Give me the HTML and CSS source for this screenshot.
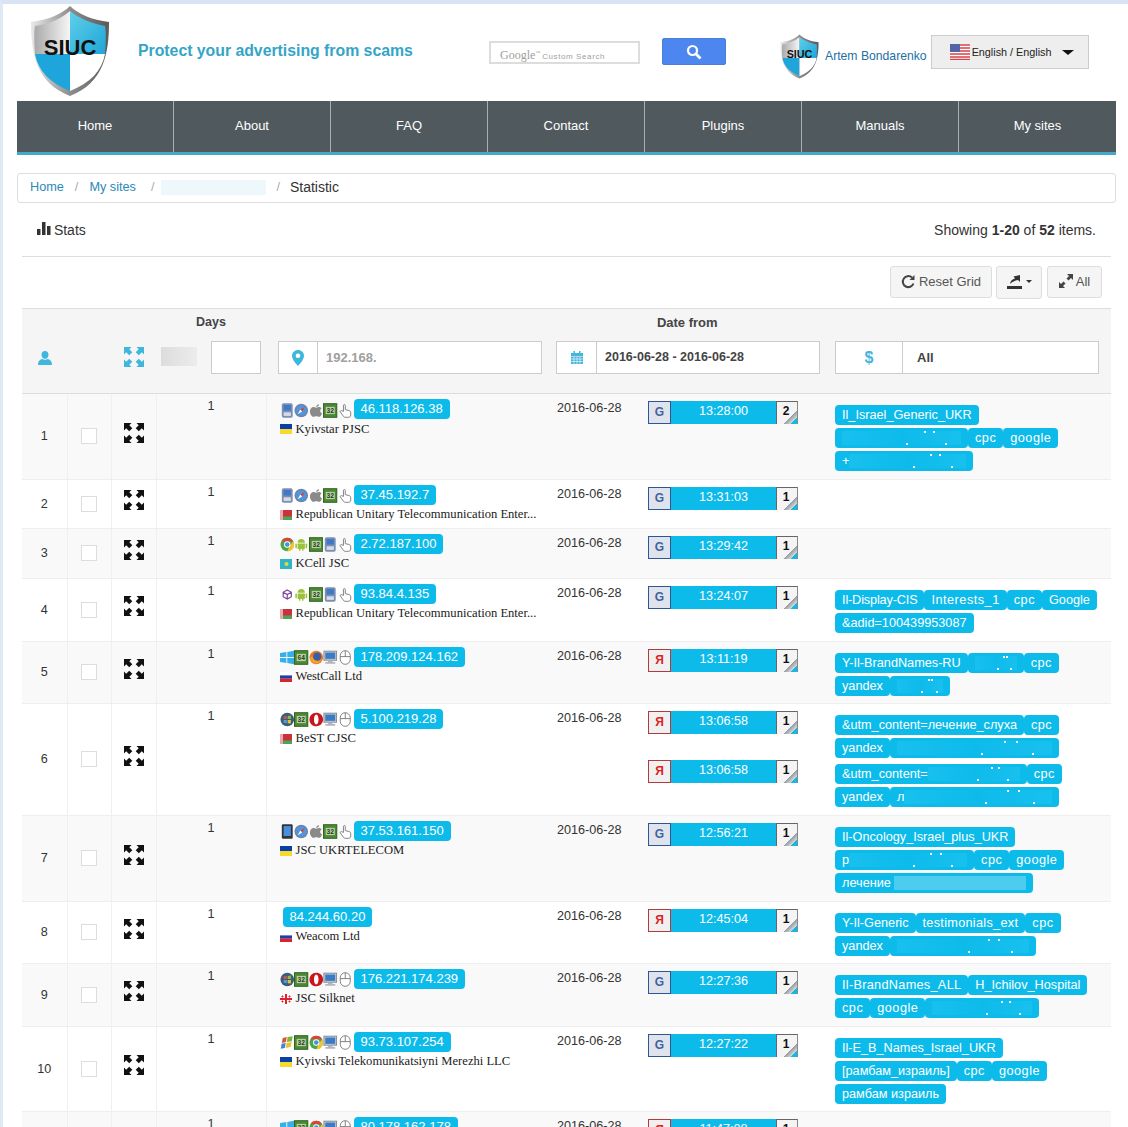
FILE: index.html
```html
<!DOCTYPE html>
<html lang="en">
  <head>
    <meta charset="utf-8">
    <title>SIUC - Statistic</title>
    <link rel="stylesheet" href="styles.css">
  </head>
  <body>
    <svg class="sprites" width="0" height="0">
      <defs>
        <linearGradient id="rim" x1="0" x2="1"><stop offset="0" stop-color="#e8e8e8"/><stop offset=".5" stop-color="#8d8d8d"/><stop offset="1" stop-color="#5a5a5a"/></linearGradient>
        <linearGradient id="sky" x1="0" y1="0" x2="1" y2="1"><stop offset="0" stop-color="#5fd0ea"/><stop offset="1" stop-color="#20a5d8"/></linearGradient>
        <linearGradient id="silver" x1="0" x2="1"><stop offset="0" stop-color="#a9a9a9"/><stop offset="1" stop-color="#f6f6f6"/></linearGradient>
        <symbol id="shield" viewBox="0 0 80 92">
          <path d="M40 1C32 9 18 15 1 17 1 48 6 78 40 91 74 78 79 48 79 17 62 15 48 9 40 1z" fill="url(#rim)"/>
          <path d="M40 6v43H5C4 34 4 27 5 21 20 19 32 13 40 6z" fill="url(#silver)"/>
          <path d="M40 6c8 7 23 13 35 15 1 6 1 13 0 28H40z" fill="url(#sky)"/>
          <path d="M5 49h35v37C20 78 8 66 5 49z" fill="#1ea6dc"/>
          <path d="M40 49h35c-3 17-15 29-35 37z" fill="#fff"/>
          <text x="40" y="50" text-anchor="middle" font-family="Liberation Sans, sans-serif" font-weight="bold" font-size="22" fill="#111">SIUC</text>
        </symbol>
        <symbol id="i-expand" viewBox="0 0 20 20">
          <path d="M0 0h7.500L5.300 2.200 8.300 5.200 5.200 8.300 2.200 5.300 0 7.500zM20 0v7.500l-2.200-2.200-3 3-3.100-3.100 3-3L12.500 0zM0 20v-7.500l2.200 2.200 3-3 3.100 3.100-3 3L7.500 20zM20 20h-7.500l2.200-2.200-3-3 3.100-3.100 3 3 2.200-2.200z"/>
        </symbol>
        <symbol id="i-phone" viewBox="0 0 16 16"><rect x="2" y="0" width="12" height="16" rx="2" fill="#7d8fb0"/><rect x="4" y="2" width="8" height="6" fill="#3f78c9"/><rect x="4" y="10" width="8" height="4" fill="#d5dbe6"/></symbol>
        <symbol id="i-tablet" viewBox="0 0 16 16"><rect x="2" y="0" width="12" height="16" rx="1.500" fill="#30343c"/><rect x="4" y="2" width="8" height="11" fill="#4a8fdc"/></symbol>
        <symbol id="i-safari" viewBox="0 0 16 16"><circle cx="8" cy="8" r="7.500" fill="#6d86ad"/><circle cx="8" cy="8" r="5.500" fill="#4d97e0"/><path d="M12 4 7 7l2 2z" fill="#e03a2e"/><path d="M4 12l3-5 2 2z" fill="#fff"/></symbol>
        <symbol id="i-apple" viewBox="0 0 16 16"><path d="M11 1c0 2-1.500 3-3 3 0-2 1.500-3 3-3zM8 5c1-.6 2-1 3-1 1.200 0 2.300.6 3 1.600-2.400 1.500-2 4.600.4 5.600C13.500 13.600 12.200 15 11 15c-1 0-1.500-.6-3-.6S6 15 5 15c-2 0-4-3.500-4-6 0-3 2-5 4-5 1 0 2 .6 3 1z" fill="#8a8a8a"/></symbol>
        <symbol id="i-chip32" viewBox="0 0 16 16"><rect x=".5" y=".5" width="15" height="15" fill="#4a8a32" stroke="#2b5a1b"/><rect x="3" y="4" width="10" height="8" fill="#b9cfa8"/><text x="8" y="10.500" text-anchor="middle" font-family="Liberation Mono, monospace" font-weight="bold" font-size="7" fill="#1d3a12">32</text></symbol>
        <symbol id="i-chip64" viewBox="0 0 16 16"><rect x=".5" y=".5" width="15" height="15" fill="#4a8a32" stroke="#2b5a1b"/><rect x="3" y="4" width="10" height="8" fill="#b9cfa8"/><text x="8" y="10.500" text-anchor="middle" font-family="Liberation Mono, monospace" font-weight="bold" font-size="7" fill="#1d3a12">64</text></symbol>
        <symbol id="i-hand" viewBox="0 0 16 16"><path d="M6 9V2.500C6 1 8 1 8 2.500V7l4 1c1.500.4 2 1 2 2.500V13c0 1.500-1 2.500-2.500 2.500H8C6.500 15.500 6 14.500 5 13L2.500 9.500C2 8.500 3.500 7.500 4.500 8.500z" fill="#fff" stroke="#777"/></symbol>
        <symbol id="i-chrome" viewBox="0 0 16 16"><circle cx="8" cy="8" r="7.500" fill="#4aa84a"/><path d="M1.500 4.300A7.500 7.500 0 0 1 14.500 4.300H8z" fill="#dc4437"/><path d="M14.500 4.300A7.500 7.500 0 0 1 8 15.500L11 9z" fill="#f4c430"/><circle cx="8" cy="8" r="3.500" fill="#fff"/><circle cx="8" cy="8" r="2.500" fill="#4a8fdc"/></symbol>
        <symbol id="i-android" viewBox="0 0 16 16"><path d="M4 6a4 4 0 0 1 8 0zM4 6.800h8V13H10.500v2h-1.500v-2H7v2H5.500v-2H4z" fill="#9cc23c"/><rect x="1.500" y="7" width="1.700" height="5" rx=".8" fill="#9cc23c"/><rect x="12.800" y="7" width="1.700" height="5" rx=".8" fill="#9cc23c"/></symbol>
        <symbol id="i-win8" viewBox="0 0 16 16"><path d="M0 3l7-1v5.500H0zM8 2l8-1.500v7H8zM0 8.500h7V14l-7-1zM8 8.500h8v7L8 14z" fill="#35b0ea"/></symbol>
        <symbol id="i-firefox" viewBox="0 0 16 16"><circle cx="8" cy="8" r="7.500" fill="#e8791e"/><circle cx="9" cy="7" r="4.500" fill="#3a5fa8"/><path d="M1 9c1 4 5 6 8 5.500 3-.5 5-3 5.500-6-1 2.500-3 4-5.500 3.500C6 11.500 4 10 4 7 2.500 7 1.500 8 1 9z" fill="#f3a32c"/></symbol>
        <symbol id="i-monitor" viewBox="0 0 16 16"><rect x="1" y="1" width="14" height="10" fill="#c7ccd3" stroke="#7d858f"/><rect x="2.500" y="2.500" width="11" height="7" fill="#3a7bc8"/><path d="M5.500 11.500h5v1.500h3v2h-11v-2h3z" fill="#b2b7be"/></symbol>
        <symbol id="i-mouse" viewBox="0 0 16 16"><rect x="2.500" y=".5" width="11" height="15" rx="5.500" fill="#fff" stroke="#777"/><path d="M2.500 7h11M8 .5V7" fill="none" stroke="#777"/></symbol>
        <symbol id="i-opera" viewBox="0 0 16 16"><path fill-rule="evenodd" d="M8 .5c4.500 0 7.500 3.300 7.500 7.500s-3 7.500-7.500 7.500S.5 12.200.5 8 3.500.5 8 .5zm0 2C6.500 2.500 5.500 5 5.500 8s1 5.500 2.500 5.500S10.500 11 10.500 8 9.500 2.500 8 2.500z" fill="#c9151b"/></symbol>
        <symbol id="i-win7" viewBox="0 0 16 16"><circle cx="8" cy="8" r="7.500" fill="#3a5d7e"/><path d="M4 4.500l3.500-.5v3.500H4z" fill="#d9553a"/><path d="M8.500 4l3.500-.5v4H8.500z" fill="#8cbf3f"/><path d="M4 8.500h3.500V12L4 11.500z" fill="#4aa3df"/><path d="M8.500 8.500H12v4l-3.500-.5z" fill="#f0c030"/></symbol>
        <symbol id="i-winxp" viewBox="0 0 16 16"><path d="M3 3l4.500-1-1 5.500L2 8.500z" fill="#d9553a"/><path d="M8.500 2 14 1l-1 5.500-5.500 1z" fill="#7fb53a"/><path d="M1.800 9.500 6.300 8.500l-1 5.500-4.500 1z" fill="#3f86d6"/><path d="M7.300 8.500 12.800 7.500l-1 5.500-5.500 1z" fill="#f0c030"/></symbol>
        <symbol id="i-tor" viewBox="0 0 16 16"><path d="M8 3l4.500 2.500v5L8 13l-4.500-2.500v-5zM3.500 5.500 8 8l4.500-2.500M8 8v5" fill="none" stroke="#7d4698" stroke-width="1.300"/></symbol>
        <symbol id="f-ua" viewBox="0 0 12 10"><rect width="12" height="5" fill="#0b3fa8"/><rect y="5" width="12" height="5" fill="#f7da2e"/></symbol>
        <symbol id="f-by" viewBox="0 0 12 10"><rect width="12" height="10" fill="#c8313e"/><rect y="6.500" x="3" width="9" height="3.500" fill="#4aa657"/><rect width="3" height="10" fill="#e8a9ac"/></symbol>
        <symbol id="f-kz" viewBox="0 0 12 10"><rect width="12" height="10" fill="#2fb4c7"/><circle cx="6.500" cy="5" r="2" fill="#e8d44a"/></symbol>
        <symbol id="f-ru" viewBox="0 0 12 10"><rect width="12" height="3.400" fill="#fff"/><rect y="3.400" width="12" height="3.300" fill="#1c3fa8"/><rect y="6.700" width="12" height="3.300" fill="#e0202c"/></symbol>
        <symbol id="f-ge" viewBox="0 0 12 10"><rect width="12" height="10" fill="#fff"/><path d="M0 5h12M6 0v10" stroke="#e0202c" stroke-width="2"/><path d="M2.500 1.500v2M1.500 2.500h2M9.500 1.500v2M8.500 2.500h2M2.500 6.500v2M1.500 7.500h2M9.500 6.500v2M8.500 7.500h2" stroke="#e0202c"/></symbol>
      </defs>
    </svg>

    <div class="page">
      <header class="top">
        <svg class="logo"><use href="#shield"/></svg>
        <div class="slogan">Protect your advertising from scams</div>
        <div class="search-box"><span class="search-google">Google<sup>™</sup></span> <span class="search-custom">Custom Search</span></div>
        <button class="search-btn" type="button">
          <svg width="16" height="16" viewBox="0 0 16 16"><circle cx="6.500" cy="6.500" r="4.500" fill="none" stroke="#fff" stroke-width="2.200"/><path d="M10 10l4.500 4.500" stroke="#fff" stroke-width="2.800"/></svg>
        </button>
        <svg class="logo-small"><use href="#shield"/></svg>
        <a class="user-name">Artem Bondarenko</a>
        <div class="lang">
          <svg class="lang-flag" viewBox="0 0 20 16">
            <rect width="20" height="16" fill="#fff"/>
            <path d="M0 1h20M0 4h20M0 7h20M0 10h20M0 13h20M0 15.500h20" stroke="#d8414a" stroke-width="1.500"/>
            <rect width="10" height="8" fill="#5566a8"/>
          </svg>
          <span class="lang-text">English / English</span>
          <span class="caret-big"></span>
        </div>
      </header>

      <nav class="menu">
        <a>Home</a><a>About</a><a>FAQ</a><a>Contact</a><a>Plugins</a><a>Manuals</a><a>My sites</a>
      </nav>

      <div class="crumbs">
        <a>Home</a><i>/</i><a>My sites</a><i class="sep-wide">/</i><span class="crumb-smear"></span><i class="sep-after">/</i><span class="crumb-here">Statistic</span>
      </div>

      <div class="summary">
        <div class="summary-title">
          <svg width="14" height="13" viewBox="0 0 14 13"><path d="M0 7h3.500v6H0zM5 0h3.500v13H5zM10 4h3.500v9H10z" fill="#333"/></svg>
          Stats
        </div>
        <div>Showing <b>1-20</b> of <b>52</b> items.</div>
      </div>

      <div class="toolbar">
        <button class="tool-btn reset" type="button">
          <svg width="15" height="15" viewBox="0 0 15 15"><path d="M12.500 9.500A5.500 5.500 0 1 1 11 3.500" fill="none" stroke="#444" stroke-width="2"/><path d="M13.500 1v5h-5z" fill="#444"/></svg>
          Reset Grid
        </button>
        <button class="tool-btn export" type="button">
          <svg width="15" height="15" viewBox="0 0 15 15"><path d="M0 12h15v3H0z" fill="#333"/><path d="M3 10c.2-3 2.500-5 5-5.500L6.500 2.500 13 1v7l-2-2C8 6.500 5 8 3 10z" fill="#333"/></svg>
          <span class="caret"></span>
        </button>
        <button class="tool-btn all" type="button">
          <svg width="14" height="14" viewBox="0 0 14 14"><path d="M14 0v6l-2-2-2.500 2.500-2-2L10 2 8 0zM0 14V8l2 2 2.500-2.500 2 2L4 12l2 2z" fill="#444"/></svg>
          All
        </button>
      </div>

      <div class="filters">
        <div class="filter-labels">
          <span class="label-days">Days</span>
          <span class="label-date">Date from</span>
        </div>
        <div class="filter-row">
          <svg class="filter-user" width="14" height="14" viewBox="0 0 14 14"><path d="M7 0c2.200 0 3.500 1.600 3.500 3.800S9 8 7 8 3.500 6 3.500 3.800 4.800 0 7 0zM4.500 8C5.500 9 8.500 9 9.500 8 12 8.500 14 10 14 14H0c0-4 2-5.500 4.500-6z" fill="#3fb7dc"/></svg>
          <svg class="filter-expand"><use href="#i-expand"/></svg>
          <span class="filter-smear"></span>
          <div class="field field-days"></div>
          <div class="field field-ip">
            <span class="addon">
              <svg width="12" height="16" viewBox="0 0 12 16"><path fill-rule="evenodd" d="M6 0c3.300 0 6 2.500 6 5.700C12 9.500 8 13.500 6 16 4 13.500 0 9.500 0 5.700 0 2.500 2.700 0 6 0zm0 3.500a2.300 2.300 0 1 0 0 4.600 2.300 2.300 0 0 0 0-4.600z" fill="#3fb7dc"/></svg>
            </span>
            <span class="field-text muted">192.168.</span>
          </div>
          <div class="field field-date">
            <span class="addon">
              <svg width="12" height="13" viewBox="0 0 12 13"><path d="M0 2h12v3H0zM0 5.500h12V13H0zM2.500 0h1.500v2.500H2.500zM8 0h1.500v2.500H8z" fill="#45b5dc"/><path d="M0 8h12M0 10.500h12M3 5.500V13M6 5.500V13M9 5.500V13" stroke="#fff" stroke-width=".6"/></svg>
            </span>
            <span class="field-text">2016-06-28 - 2016-06-28</span>
          </div>
          <div class="field field-cost">
            <span class="addon addon-wide">$</span>
            <span class="field-text">All</span>
          </div>
        </div>
      </div>

      <table class="grid">
        <colgroup>
          <col class="c-num"><col class="c-check"><col class="c-open"><col class="c-days"><col class="c-ip"><col class="c-date"><col class="c-time"><col class="c-tags">
        </colgroup>
        <tbody>
          <tr class="h-85">
            <td class="mid">1</td><td class="mid"><span class="check"></span></td><td class="mid"><svg class="open"><use href="#i-expand"/></svg></td><td class="days">1</td>
            <td class="ip"><div class="ip-line"><span class="icons"><svg><use href="#i-phone"/></svg><svg><use href="#i-safari"/></svg><svg><use href="#i-apple"/></svg><svg><use href="#i-chip32"/></svg><svg><use href="#i-hand"/></svg></span><span class="ip-badge">46.118.126.38</span></div><div class="org"><svg class="flag"><use href="#f-ua"/></svg>Kyivstar PJSC</div></td>
            <td class="date">2016-06-28</td>
            <td class="time"><div class="hit"><span class="src src-g">G</span><span class="hit-time">13:28:00</span><span class="count">2</span></div></td>
            <td class="tags"><div class="tag-line"><span class="tag">Il_Israel_Generic_UKR</span></div><div class="tag-line"><span class="tag"><span class="smear w-119"></span></span><span class="tag tag-wide">cpc</span><span class="tag tag-wide">google</span></div><div class="tag-line"><span class="tag">+<span class="smear w-117"></span></span></div></td>
          </tr>
          <tr class="h-49">
            <td class="mid">2</td><td class="mid"><span class="check"></span></td><td class="mid"><svg class="open"><use href="#i-expand"/></svg></td><td class="days">1</td>
            <td class="ip"><div class="ip-line"><span class="icons"><svg><use href="#i-phone"/></svg><svg><use href="#i-safari"/></svg><svg><use href="#i-apple"/></svg><svg><use href="#i-chip32"/></svg><svg><use href="#i-hand"/></svg></span><span class="ip-badge">37.45.192.7</span></div><div class="org"><svg class="flag"><use href="#f-by"/></svg>Republican Unitary Telecommunication Enter...</div></td>
            <td class="date">2016-06-28</td>
            <td class="time"><div class="hit"><span class="src src-g">G</span><span class="hit-time">13:31:03</span><span class="count">1</span></div></td>
            <td class="tags"></td>
          </tr>
          <tr class="h-50">
            <td class="mid">3</td><td class="mid"><span class="check"></span></td><td class="mid"><svg class="open"><use href="#i-expand"/></svg></td><td class="days">1</td>
            <td class="ip"><div class="ip-line"><span class="icons"><svg><use href="#i-chrome"/></svg><svg><use href="#i-android"/></svg><svg><use href="#i-chip32"/></svg><svg><use href="#i-phone"/></svg><svg><use href="#i-hand"/></svg></span><span class="ip-badge">2.72.187.100</span></div><div class="org"><svg class="flag"><use href="#f-kz"/></svg>KCell JSC</div></td>
            <td class="date">2016-06-28</td>
            <td class="time"><div class="hit"><span class="src src-g">G</span><span class="hit-time">13:29:42</span><span class="count">1</span></div></td>
            <td class="tags"></td>
          </tr>
          <tr class="h-63">
            <td class="mid">4</td><td class="mid"><span class="check"></span></td><td class="mid"><svg class="open"><use href="#i-expand"/></svg></td><td class="days">1</td>
            <td class="ip"><div class="ip-line"><span class="icons"><svg><use href="#i-tor"/></svg><svg><use href="#i-android"/></svg><svg><use href="#i-chip32"/></svg><svg><use href="#i-phone"/></svg><svg><use href="#i-hand"/></svg></span><span class="ip-badge">93.84.4.135</span></div><div class="org"><svg class="flag"><use href="#f-by"/></svg>Republican Unitary Telecommunication Enter...</div></td>
            <td class="date">2016-06-28</td>
            <td class="time"><div class="hit"><span class="src src-g">G</span><span class="hit-time">13:24:07</span><span class="count">1</span></div></td>
            <td class="tags"><div class="tag-line"><span class="tag tag-narrow">Il-Display-CIS</span><span class="tag tag-wide">Interests_1</span><span class="tag tag-wide">cpc</span><span class="tag">Google</span></div><div class="tag-line"><span class="tag">&amp;adid=100439953087</span></div></td>
          </tr>
          <tr class="h-62">
            <td class="mid">5</td><td class="mid"><span class="check"></span></td><td class="mid"><svg class="open"><use href="#i-expand"/></svg></td><td class="days">1</td>
            <td class="ip"><div class="ip-line"><span class="icons"><svg><use href="#i-win8"/></svg><svg><use href="#i-chip64"/></svg><svg><use href="#i-firefox"/></svg><svg><use href="#i-monitor"/></svg><svg><use href="#i-mouse"/></svg></span><span class="ip-badge">178.209.124.162</span></div><div class="org"><svg class="flag"><use href="#f-ru"/></svg>WestCall Ltd</div></td>
            <td class="date">2016-06-28</td>
            <td class="time"><div class="hit"><span class="src src-y">Я</span><span class="hit-time">13:11:19</span><span class="count">1</span></div></td>
            <td class="tags"><div class="tag-line"><span class="tag">Y-Il-BrandNames-RU</span><span class="tag"><span class="smear w-42"></span></span><span class="tag tag-wide">cpc</span></div><div class="tag-line"><span class="tag">yandex</span><span class="tag"><span class="smear w-46"></span></span></div></td>
          </tr>
          <tr class="h-112">
            <td class="mid">6</td><td class="mid"><span class="check"></span></td><td class="mid"><svg class="open"><use href="#i-expand"/></svg></td><td class="days">1</td>
            <td class="ip"><div class="ip-line"><span class="icons"><svg><use href="#i-win7"/></svg><svg><use href="#i-chip32"/></svg><svg><use href="#i-opera"/></svg><svg><use href="#i-monitor"/></svg><svg><use href="#i-mouse"/></svg></span><span class="ip-badge">5.100.219.28</span></div><div class="org"><svg class="flag"><use href="#f-by"/></svg>BeST CJSC</div></td>
            <td class="date">2016-06-28</td>
            <td class="time"><div class="hit"><span class="src src-y">Я</span><span class="hit-time">13:06:58</span><span class="count">1</span></div><div class="hit hit-next"><span class="src src-y">Я</span><span class="hit-time">13:06:58</span><span class="count">1</span></div></td>
            <td class="tags"><div class="tag-block"><div class="tag-line"><span class="tag">&amp;utm_content=лечение_слуха</span><span class="tag tag-wide">cpc</span></div><div class="tag-line"><span class="tag">yandex</span><span class="tag"><span class="smear w-155"></span></span></div></div><div class="tag-block"><div class="tag-line"><span class="tag">&amp;utm_content=<span class="smear w-92"></span></span><span class="tag tag-wide">cpc</span></div><div class="tag-line"><span class="tag">yandex</span><span class="tag">л<span class="smear w-148"></span></span></div></div></td>
          </tr>
          <tr class="h-86">
            <td class="mid">7</td><td class="mid"><span class="check"></span></td><td class="mid"><svg class="open"><use href="#i-expand"/></svg></td><td class="days">1</td>
            <td class="ip"><div class="ip-line"><span class="icons"><svg><use href="#i-tablet"/></svg><svg><use href="#i-safari"/></svg><svg><use href="#i-apple"/></svg><svg><use href="#i-chip32"/></svg><svg><use href="#i-hand"/></svg></span><span class="ip-badge">37.53.161.150</span></div><div class="org"><svg class="flag"><use href="#f-ua"/></svg>JSC UKRTELECOM</div></td>
            <td class="date">2016-06-28</td>
            <td class="time"><div class="hit"><span class="src src-g">G</span><span class="hit-time">12:56:21</span><span class="count">1</span></div></td>
            <td class="tags"><div class="tag-line"><span class="tag">Il-Oncology_Israel_plus_UKR</span></div><div class="tag-line"><span class="tag">p<span class="smear w-118"></span></span><span class="tag tag-wide">cpc</span><span class="tag tag-wide">google</span></div><div class="tag-line"><span class="tag">лечение&nbsp;<span class="smear smear-pale w-132"></span></span></div></td>
          </tr>
          <tr class="h-62">
            <td class="mid">8</td><td class="mid"><span class="check"></span></td><td class="mid"><svg class="open"><use href="#i-expand"/></svg></td><td class="days">1</td>
            <td class="ip"><div class="ip-line ip-line-bare"><span class="ip-badge">84.244.60.20</span></div><div class="org"><svg class="flag"><use href="#f-ru"/></svg>Weacom Ltd</div></td>
            <td class="date">2016-06-28</td>
            <td class="time"><div class="hit"><span class="src src-y">Я</span><span class="hit-time">12:45:04</span><span class="count">1</span></div></td>
            <td class="tags"><div class="tag-line"><span class="tag">Y-Il-Generic</span><span class="tag tag-snug">testimonials_ext</span><span class="tag tag-wide">cpc</span></div><div class="tag-line"><span class="tag">yandex</span><span class="tag"><span class="smear w-132"></span></span></div></td>
          </tr>
          <tr class="h-63">
            <td class="mid">9</td><td class="mid"><span class="check"></span></td><td class="mid"><svg class="open"><use href="#i-expand"/></svg></td><td class="days">1</td>
            <td class="ip"><div class="ip-line"><span class="icons"><svg><use href="#i-win7"/></svg><svg><use href="#i-chip32"/></svg><svg><use href="#i-opera"/></svg><svg><use href="#i-monitor"/></svg><svg><use href="#i-mouse"/></svg></span><span class="ip-badge">176.221.174.239</span></div><div class="org"><svg class="flag"><use href="#f-ge"/></svg>JSC Silknet</div></td>
            <td class="date">2016-06-28</td>
            <td class="time"><div class="hit"><span class="src src-g">G</span><span class="hit-time">12:27:36</span><span class="count">1</span></div></td>
            <td class="tags"><div class="tag-line"><span class="tag tag-snug">Il-BrandNames_ALL</span><span class="tag">H_Ichilov_Hospital</span></div><div class="tag-line"><span class="tag tag-wide">cpc</span><span class="tag tag-wide">google</span><span class="tag"><span class="smear w-100"></span></span></div></td>
          </tr>
          <tr class="h-85">
            <td class="mid">10</td><td class="mid"><span class="check"></span></td><td class="mid"><svg class="open"><use href="#i-expand"/></svg></td><td class="days">1</td>
            <td class="ip"><div class="ip-line"><span class="icons"><svg><use href="#i-winxp"/></svg><svg><use href="#i-chip32"/></svg><svg><use href="#i-chrome"/></svg><svg><use href="#i-monitor"/></svg><svg><use href="#i-mouse"/></svg></span><span class="ip-badge">93.73.107.254</span></div><div class="org"><svg class="flag"><use href="#f-ua"/></svg>Kyivski Telekomunikatsiyni Merezhi LLC</div></td>
            <td class="date">2016-06-28</td>
            <td class="time"><div class="hit"><span class="src src-g">G</span><span class="hit-time">12:27:22</span><span class="count">1</span></div></td>
            <td class="tags"><div class="tag-line"><span class="tag">Il-E_B_Names_Israel_UKR</span></div><div class="tag-line"><span class="tag">[рамбам_израиль]</span><span class="tag tag-wide">cpc</span><span class="tag tag-wide">google</span></div><div class="tag-line"><span class="tag">рамбам израиль</span></div></td>
          </tr>
          <tr class="h-86">
            <td class="mid">11</td><td class="mid"><span class="check"></span></td><td class="mid"><svg class="open"><use href="#i-expand"/></svg></td><td class="days">1</td>
            <td class="ip"><div class="ip-line"><span class="icons"><svg><use href="#i-win8"/></svg><svg><use href="#i-chip32"/></svg><svg><use href="#i-chrome"/></svg><svg><use href="#i-monitor"/></svg><svg><use href="#i-mouse"/></svg></span><span class="ip-badge">80.178.162.178</span></div></td>
            <td class="date">2016-06-28</td>
            <td class="time"><div class="hit"><span class="src src-y">Я</span><span class="hit-time">11:47:08</span><span class="count">1</span></div></td>
            <td class="tags"></td>
          </tr>
        </tbody>
      </table>
    </div>
  </body>
</html>
```

FILE: styles.css
```css
html, body {
  margin: 0;
  height: 100%;
  overflow: hidden;
}
body {
  box-sizing: border-box;
  background: #fff;
  border-top: 4px solid #d6e4f4;
  border-left: 3px solid #dfe9f5;
  color: #333;
  font-family: "Liberation Sans", Arial, sans-serif;
  font-size: 14px;
}
.sprites {
  position: absolute;
}
.page {
  width: 1099px;
  height: 1123px;
  margin-left: 14px;
  overflow: hidden;
}

/* header */
.top {
  display: flex;
  align-items: flex-start;
  height: 97px;
}
.logo {
  width: 80px;
  height: 92px;
  margin: 1px 0 0 13px;
}
.slogan {
  width: 351px;
  margin: 37px 0 0 28px;
  color: #34a5c6;
  font-size: 15.800px;
  font-weight: bold;
  line-height: 19px;
}
.search-box {
  box-sizing: border-box;
  width: 151px;
  height: 23px;
  margin-top: 37px;
  padding-left: 9px;
  border: 2px solid #ddd;
  color: #a0a0a0;
  line-height: 19px;
  white-space: nowrap;
}
.search-google {
  font-family: "Liberation Serif", serif;
  font-size: 12px;
}
.search-google sup {
  font-size: 5px;
}
.search-custom {
  margin-left: -2px;
  font-size: 8px;
  letter-spacing: .6px;
}
.search-btn {
  width: 64px;
  height: 27px;
  margin: 34px 0 0 22px;
  padding: 0;
  background: #4d86ee;
  border: 1px solid #4a7fd8;
  border-radius: 2px;
}
.search-btn svg {
  display: block;
  margin: 0 auto;
}
.logo-small {
  width: 41px;
  height: 45px;
  margin: 30px 0 0 53px;
}
.user-name {
  margin: 45px 0 0 5px;
  color: #236fa5;
  font-size: 12.200px;
  line-height: 15px;
  white-space: nowrap;
}
.lang {
  box-sizing: border-box;
  display: flex;
  align-items: center;
  width: 158px;
  height: 34px;
  margin: 31px 0 0 4px;
  padding-left: 18px;
  background: #eee;
  border: 1px solid #ccc;
  color: #222;
  font-size: 10.800px;
}
.lang-flag {
  width: 20px;
  height: 16px;
}
.lang-text {
  margin-left: 2px;
  white-space: nowrap;
}
.caret-big {
  margin-left: 11px;
  border-top: 5px solid #111;
  border-left: 6px solid transparent;
  border-right: 6px solid transparent;
}

/* nav */
.menu {
  display: flex;
  height: 51px;
  background: #50595d;
  border-bottom: 3px solid #45aac8;
}
.menu a {
  box-sizing: border-box;
  flex: none;
  width: 157px;
  border-left: 1px solid #a9aeb0;
  color: #fff;
  font-size: 13px;
  line-height: 50px;
  text-align: center;
}
.menu a:first-child {
  width: 156px;
  border-left: none;
}
.menu a:last-child {
  flex: 1;
}

.crumbs {
  box-sizing: border-box;
  display: flex;
  align-items: center;
  height: 30px;
  margin-top: 18px;
  padding: 0 0 2px 12px;
  border: 1px solid #ddd;
  border-radius: 3px;
  font-size: 12.700px;
}
.crumbs a {
  color: #2a8ab8;
}
.crumbs i {
  margin: 0 11px;
  color: #aaa;
  font-style: normal;
}
.crumbs .sep-wide {
  margin-left: 15px;
}
.crumbs .sep-after {
  margin: 0 10px;
}
.crumb-smear {
  width: 105px;
  height: 15px;
  margin-left: -4px;
  background: #eef7fb;
}
.crumb-here {
  font-size: 14px;
}

/* stats line */
.summary {
  display: flex;
  justify-content: space-between;
  height: 54px;
  margin-left: 5px;
  width: 1089px;
  padding: 0 15px;
  box-sizing: border-box;
  border-bottom: 1px solid #ddd;
  line-height: 55px;
}
.summary-title svg {
  margin-right: -1px;
}
.toolbar {
  display: flex;
  justify-content: flex-end;
  gap: 4px;
  height: 51px;
  width: 1085px;
  padding-top: 9px;
  box-sizing: border-box;
}
.tool-btn {
  display: flex;
  align-items: center;
  justify-content: center;
  gap: 3px;
  height: 32px;
  padding: 0 0 2px;
  background: #f5f5f5;
  border: 1px solid #ddd;
  border-radius: 3px;
  color: #555;
  font-family: inherit;
  font-size: 13px;
}
.reset {
  width: 102px;
}
.export {
  width: 46px;
  height: 33px;
  gap: 4px;
}
.all {
  width: 55px;
  margin-left: 1px;
}
.caret {
  border-top: 3px solid #333;
  border-left: 3px solid transparent;
  border-right: 3px solid transparent;
}

/* filter head */
.filters {
  box-sizing: border-box;
  width: 1089px;
  height: 86px;
  margin-left: 5px;
  background: #f5f5f5;
  border-top: 1px solid #ddd;
  border-bottom: 1px solid #ddd;
}
.filter-labels {
  display: flex;
  height: 32px;
  color: #444;
  font-size: 13px;
  font-weight: bold;
  line-height: 27px;
}
.label-days {
  margin-left: 174px;
  font-size: 12.500px;
}
.label-date {
  margin-left: 431px;
}
.filter-row {
  display: flex;
  align-items: center;
  height: 33px;
}
.filter-user {
  margin-left: 16px;
}
.filter-expand {
  width: 20px;
  height: 20px;
  margin: -2px 0 0 72px;
  fill: #3fb7dc;
}
.filter-smear {
  width: 36px;
  height: 19px;
  margin: -2px 0 0 17px;
  background: linear-gradient(90deg, #dcdcdc, #e6e6e6 60%, #ececec);
}
.field {
  box-sizing: border-box;
  display: flex;
  height: 33px;
  background: #fff;
  border: 1px solid #ccc;
  font-size: 13px;
  font-weight: bold;
  line-height: 31px;
}
.field-days {
  width: 50px;
  margin-left: 14px;
}
.field-ip {
  width: 264px;
  margin-left: 17px;
}
.field-date {
  width: 264px;
  margin-left: 14px;
}
.field-cost {
  width: 264px;
  margin-left: 15px;
}
.addon {
  box-sizing: border-box;
  display: flex;
  align-items: center;
  justify-content: center;
  flex: none;
  width: 39px;
  border-right: 1px solid #ccc;
  color: #45b5dc;
}
.field-date .addon {
  width: 40px;
}
.addon-wide {
  width: 67px;
  font-size: 16px;
}
.field-text {
  padding-left: 8px;
  color: #444;
}
.field-date .field-text {
  font-size: 12.500px;
}
.field-cost .field-text {
  padding-left: 14px;
}
.field-text.muted {
  color: #a0a0a0;
}

/* grid */
.grid {
  width: 1089px;
  margin-left: 5px;
  border-collapse: collapse;
  table-layout: fixed;
  font-size: 12.600px;
}
.c-num { width: 45px; }
.c-check { width: 44px; }
.c-open { width: 45px; }
.c-days { width: 110px; }
.c-ip { width: 283px; }
.c-date { width: 91px; }
.c-time { width: 188px; }
.c-tags { width: 283px; }
.h-49 { height: 49px; }
.h-50 { height: 50px; }
.h-62 { height: 62px; }
.h-63 { height: 63px; }
.h-85 { height: 85px; }
.h-86 { height: 86px; }
.h-112 { height: 112px; }
.grid tr:nth-child(odd) {
  background: #f9f9f9;
}
.grid td {
  padding: 0;
  border-bottom: 1px solid #eee;
  vertical-align: top;
}
.grid td:nth-child(-n+4) {
  border-right: 1px solid #f0f0f0;
}
.grid td.mid {
  vertical-align: middle;
  text-align: center;
}
.check {
  display: block;
  box-sizing: border-box;
  width: 16px;
  height: 16px;
  margin: 0 auto;
  background: #fff;
  border: 1px solid #ddd;
}
.open {
  display: block;
  width: 20px;
  height: 20px;
  margin: 0 auto 7px;
  fill: #111;
}
.days {
  padding-top: 2px !important;
  line-height: 20px;
  text-align: center;
}
.ip {
  padding: 5px 0 0 13px !important;
}
.ip-line {
  display: flex;
  align-items: center;
  height: 20px;
}
.ip-line-bare {
  padding-left: 3px;
}
.icons {
  display: flex;
  width: 74px;
  margin-top: 2px;
}
.icons svg {
  flex: none;
  width: 14.500px;
  height: 15px;
}
.ip-badge {
  padding: 0 7px;
  background: #0dbbeb;
  border-radius: 4px;
  color: #fff;
  font-size: 13px;
  line-height: 20px;
}
.org {
  display: flex;
  align-items: center;
  height: 20px;
  color: #222;
  font-family: "Liberation Serif", serif;
  font-size: 12.600px;
  white-space: nowrap;
}
.flag {
  flex: none;
  width: 12px;
  height: 10px;
  margin-right: 4px;
}
.date {
  padding: 6px 0 0 8px !important;
  line-height: 16px;
}
.time {
  padding: 7px 0 0 8px !important;
}
.hit {
  display: flex;
  width: 150px;
  height: 23px;
  background: #0dbbeb;
  border-radius: 0 2px 2px 0;
}
.hit-next {
  margin-top: 26px;
}
.src {
  box-sizing: border-box;
  width: 23px;
  font-size: 12px;
  font-weight: bold;
  line-height: 21px;
  text-align: center;
}
.src-g {
  background: #dfe3ec;
  border: 1px solid #2f5597;
  color: #3f62a0;
}
.src-y {
  background: #f0f0f0;
  border: 1px solid #b23a3a;
  color: #e02020;
}
.hit-time {
  flex: 1;
  color: #fff;
  line-height: 20px;
  text-align: center;
}
.count {
  box-sizing: border-box;
  width: 22px;
  height: 23px;
  padding-right: 2px;
  background: linear-gradient(135deg, #f4f4f4 68%, #9a9ea2 69%, #d6d6d6 84%, #0dbbeb 85%);
  border: 1px solid #666;
  border-right-color: #888;
  border-bottom: none;
  color: #111;
  font-size: 12px;
  font-weight: bold;
  line-height: 18px;
  text-align: center;
}
.tags {
  padding: 10px 0 4px 7px !important;
}
.tag-line {
  display: flex;
  align-items: flex-start;
  height: 23px;
  padding-top: 1px;
  box-sizing: border-box;
}
.tag-block + .tag-block {
  margin-top: 3px;
}
.tag {
  display: inline-flex;
  align-items: center;
  height: 20px;
  padding: 0 7px;
  background: #0dbbeb;
  border-radius: 4px;
  color: #fff;
  font-size: 12.700px;
  white-space: nowrap;
}
.tag-wide {
  letter-spacing: .5px;
}
.tag-snug {
  letter-spacing: .3px;
}
.tag-narrow {
  letter-spacing: -.15px;
}
.smear {
  display: inline-block;
  height: 14px;
  background:
    linear-gradient(#fff, #fff) 70% 0 / 2px 2px no-repeat,
    linear-gradient(#fff, #fff) 78% 0 / 2px 2px no-repeat,
    linear-gradient(#fff, #fff) 55% 100% / 2px 2px no-repeat,
    linear-gradient(#fff, #fff) 88% 100% / 2px 2px no-repeat,
    linear-gradient(90deg, #18c0ee, #0dbbeb 50%, #18c0ee);
}
.smear-pale {
  background: #4ccdf0;
}
.w-42 { width: 42px; }
.w-46 { width: 46px; }
.w-92 { width: 92px; }
.w-100 { width: 100px; }
.w-117 { width: 117px; }
.w-118 { width: 118px; }
.w-119 { width: 119px; }
.w-132 { width: 132px; }
.w-148 { width: 148px; }
.w-155 { width: 155px; }
```
